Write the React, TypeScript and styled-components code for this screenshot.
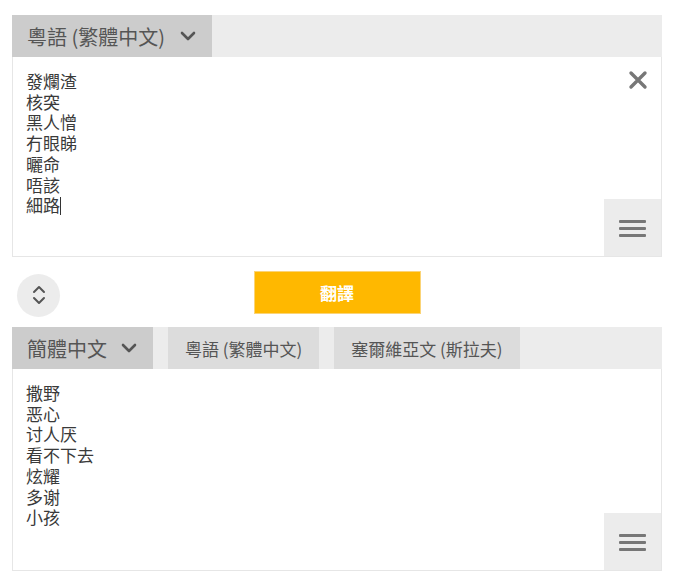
import React from "react";
import styled, { createGlobalStyle } from "styled-components";

const Global = createGlobalStyle`
  html, body { margin: 0; padding: 0; background: #ffffff; }
  body { font-family: "Noto Sans CJK TC", "Noto Sans", sans-serif; }
`;

const Page = styled.div`
  width: 650px;
  margin-left: 12px;
  padding-top: 15px;
`;

const Header = styled.div`
  display: flex;
  align-items: stretch;
  height: 42px;
  background: #ececec;
`;

const Dropdown = styled.div<{ $gap: number }>`
  display: flex;
  align-items: center;
  gap: ${(p) => p.$gap}px;
  padding: 0 16px 0 15px;
  background: #cccccc;
  color: #555555;
  font-size: 20px;
  white-space: nowrap;
`;

const Tab = styled.div`
  display: flex;
  align-items: center;
  margin-left: 15px;
  padding: 0 17px;
  background: #dcdcdc;
  color: #555555;
  font-size: 17px;
  white-space: nowrap;
`;

const Box = styled.div<{ $h: number; $lang: string }>`
  position: relative;
  height: ${(p) => p.$h}px;
  box-sizing: border-box;
  border: 1px solid #e6e6e6;
  border-top: none;
  padding: 14px 13px;
  font-family: ${(p) =>
    p.$lang === "sc"
      ? `"Noto Sans CJK SC", "Noto Sans", sans-serif`
      : `"Noto Sans CJK TC", "Noto Sans", sans-serif`};
  font-size: 17px;
  line-height: 20.7px;
  color: #3a3a3a;
`;

const Line = styled.div`
  white-space: nowrap;
`;

const Caret = styled.span`
  display: inline-block;
  width: 1px;
  height: 18px;
  background: #333;
  vertical-align: -3px;
`;

const CloseBtn = styled.div`
  position: absolute;
  top: 13px;
  right: 13px;
  width: 20px;
  height: 20px;
  display: flex;
  align-items: center;
  justify-content: center;
`;

const MenuBtn = styled.div`
  position: absolute;
  right: 0;
  bottom: 0;
  width: 57px;
  height: 57px;
  background: #ececec;
  display: flex;
  align-items: center;
  justify-content: center;
`;

const MiddleRow = styled.div`
  display: grid;
  grid-template-columns: 1fr auto 1fr;
  align-items: center;
  height: 70px;
`;

const SwapBtn = styled.div`
  justify-self: start;
  margin-left: 5px;
  margin-top: 6px;
  width: 43px;
  height: 43px;
  border-radius: 50%;
  background: #ececec;
  display: flex;
  align-items: center;
  justify-content: center;
`;

const TranslateBtn = styled.div`
  width: 167px;
  height: 43px;
  box-sizing: border-box;
  background: #ffb800;
  border: 1px solid #fbd477;
  color: #ffffff;
  font-weight: 700;
  font-size: 17px;
  display: flex;
  align-items: center;
  justify-content: center;
`;

const Chevron = () => (
  <svg width="16" height="10" viewBox="0 0 16 10">
    <path d="M2 2 L8 8 L14 2" fill="none" stroke="#555" strokeWidth="2.6" strokeLinecap="round" strokeLinejoin="round" />
  </svg>
);

const CloseIcon = () => (
  <svg width="20" height="20" viewBox="0 0 20 20">
    <path d="M3 3 L17 17 M17 3 L3 17" stroke="#777" strokeWidth="3.4" strokeLinecap="round" />
  </svg>
);

const MenuIcon = () => (
  <svg width="27" height="20" viewBox="0 0 27 20">
    <rect x="0" y="2" width="27" height="3" rx="1" fill="#777" />
    <rect x="0" y="9" width="27" height="3" rx="1" fill="#777" />
    <rect x="0" y="16" width="27" height="3" rx="1" fill="#777" />
  </svg>
);

const SwapIcon = () => (
  <svg width="14" height="20" viewBox="0 0 14 20">
    <path d="M2 7 L7 2 L12 7 M2 13 L7 18 L12 13" fill="none" stroke="#555" strokeWidth="2" strokeLinecap="round" strokeLinejoin="round" />
  </svg>
);

const source = ["發爛渣", "核突", "黑人憎", "冇眼睇", "曬命", "唔該", "細路"];
const result = ["撒野", "恶心", "讨人厌", "看不下去", "炫耀", "多谢", "小孩"];

export default function App() {
  return (
    <>
      <Global />
      <Page>
        <Header>
          <Dropdown $gap={15}>
            粵語 (繁體中文) <Chevron />
          </Dropdown>
        </Header>
        <Box $h={200} $lang="tc">
          {source.map((s, i) => (
            <Line key={i}>
              {s}
              {i === source.length - 1 && <Caret />}
            </Line>
          ))}
          <CloseBtn>
            <CloseIcon />
          </CloseBtn>
          <MenuBtn>
            <MenuIcon />
          </MenuBtn>
        </Box>
        <MiddleRow>
          <SwapBtn>
            <SwapIcon />
          </SwapBtn>
          <TranslateBtn>翻譯</TranslateBtn>
          <div />
        </MiddleRow>
        <Header>
          <Dropdown $gap={14}>
            簡體中文 <Chevron />
          </Dropdown>
          <Tab>粵語 (繁體中文)</Tab>
          <Tab>塞爾維亞文 (斯拉夫)</Tab>
        </Header>
        <Box $h={202} $lang="sc">
          {result.map((s, i) => (
            <Line key={i}>{s}</Line>
          ))}
          <MenuBtn>
            <MenuIcon />
          </MenuBtn>
        </Box>
      </Page>
    </>
  );
}
